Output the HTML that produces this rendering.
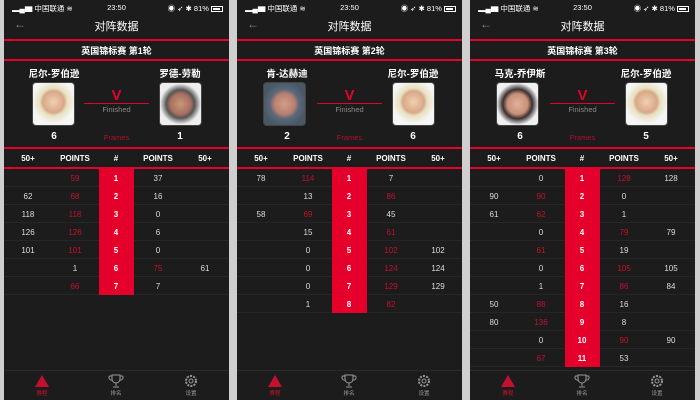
<!DOCTYPE html>
<html><head><meta charset="utf-8"><style>
*{margin:0;padding:0;box-sizing:border-box}
body{width:700px;height:400px;background:#cfcfcf;position:relative;overflow:hidden;font-family:"Liberation Sans","Noto Sans CJK SC",sans-serif;color:#fff}
.ph{position:absolute;top:0;width:225px;height:400px;background:#1c1c1c;overflow:hidden}
.sb{position:absolute;top:1px;left:0;right:0;height:12px;font-size:7.5px;color:#fff}
.sb .l{position:absolute;left:8px;top:2px}
.sb .c{position:absolute;left:0;right:0;text-align:center;top:2px}
.sb .r{position:absolute;right:6px;top:2px}
.bat{display:inline-block;width:12px;height:6px;border:1px solid #fff;vertical-align:-1px;position:relative}
.bat:after{content:"";position:absolute;left:1px;top:1px;width:7px;height:2px;background:#fff}
.ttl{position:absolute;top:18px;left:0;right:0;text-align:center;font-size:11px}
.back{position:absolute;left:10px;top:17px;color:#888;font-size:12px}
.rl{position:absolute;left:0;right:0;height:2px;background:#e4002b}
.tour{position:absolute;top:42px;left:0;right:0;height:18px;line-height:18px;text-align:center;font-size:9px;font-weight:bold}
.nm{position:absolute;top:66px;width:80px;text-align:center;font-size:9.5px;font-weight:bold}
.av{position:absolute;top:82px;width:43px;height:44px;border-radius:4px;border:1px solid #444;overflow:hidden}
.sc{position:absolute;top:131px;width:80px;text-align:center;font-size:10px;font-weight:bold}
.v{position:absolute;left:90px;width:45px;top:87px;text-align:center;color:#e4002b;font-weight:bold;font-size:15px}
.fin{position:absolute;left:80px;width:65px;top:103px;text-align:center;color:#888;font-size:7.5px;border-top:1px solid #e4002b;padding-top:1px}
.fr{position:absolute;left:80px;width:65px;top:133px;text-align:center;color:#b0102a;font-size:7.5px}
.hd{position:absolute;top:150px;left:0;right:0;height:18px;font-size:8px;font-weight:bold}
.hd span,.row span{position:absolute;width:50px;margin-left:-25px;text-align:center;top:4px}
.row{position:absolute;left:0;right:0;height:18px;border-bottom:1px solid #262626;font-size:8px;color:#ddd}
.row span{top:5px}
.row .n{color:#fff;font-weight:bold;z-index:3}
.red{color:#c4102e!important}
.col{position:absolute;left:95px;width:35px;top:169px;background:#e4002b;z-index:2}
.tab{position:absolute;top:370px;left:0;right:0;height:30px;border-top:1px solid #2a2a2a;background:#1c1c1c}
.ti{position:absolute;top:3px;width:40px;margin-left:-20px;text-align:center;font-size:5.5px;color:#999}
.ti svg{display:block;margin:0 auto 1px}
</style></head><body>

<!-- PHONE 1 -->
<div class="ph" style="left:4px">
<div class="sb"><span class="l">▂▄▆ 中国联通 ≋</span><span class="c">23:50</span><span class="r">◉ ➶ ✱ 81% <span class="bat"></span></span></div>
<div class="back">←</div><div class="ttl">对阵数据</div>
<div class="rl" style="top:39px"></div>
<div class="tour">英国锦标赛 第1轮</div>
<div class="rl" style="top:59px"></div>
<div class="nm" style="left:10px">尼尔-罗伯逊</div><div class="nm" style="left:136px">罗德-劳勒</div>
<div class="av" style="left:28px;background:radial-gradient(circle at 50% 45%,#f0d0b0 0,#d8a888 35%,#e8e0c0 45%,#f5f5f5 70%)"></div>
<div class="av" style="left:155px;background:radial-gradient(circle at 50% 50%,#c89878 0,#a87060 35%,#555 48%,#eee 70%)"></div>
<div class="v">V</div><div class="fin">Finished</div>
<div class="sc" style="left:10px">6</div><div class="fr">Frames</div><div class="sc" style="left:136px">1</div>
<div class="rl" style="top:147px"></div>
<div class="hd"><span style="left:24px">50+</span><span style="left:71px">POINTS</span><span style="left:112px">#</span><span style="left:154px">POINTS</span><span style="left:201px">50+</span></div>
<div class="rl" style="top:167px"></div>
<div class="col" style="height:126px"></div>
<div class="row" style="top:169px"><span style="left:71px" class="red">59</span><span style="left:112px" class="n">1</span><span style="left:154px">37</span></div>
<div class="row" style="top:187px"><span style="left:24px">62</span><span style="left:71px" class="red">68</span><span style="left:112px" class="n">2</span><span style="left:154px">16</span></div>
<div class="row" style="top:205px"><span style="left:24px">118</span><span style="left:71px" class="red">118</span><span style="left:112px" class="n">3</span><span style="left:154px">0</span></div>
<div class="row" style="top:223px"><span style="left:24px">126</span><span style="left:71px" class="red">126</span><span style="left:112px" class="n">4</span><span style="left:154px">6</span></div>
<div class="row" style="top:241px"><span style="left:24px">101</span><span style="left:71px" class="red">101</span><span style="left:112px" class="n">5</span><span style="left:154px">0</span></div>
<div class="row" style="top:259px"><span style="left:71px">1</span><span style="left:112px" class="n">6</span><span style="left:154px" class="red">75</span><span style="left:201px">61</span></div>
<div class="row" style="top:277px"><span style="left:71px" class="red">66</span><span style="left:112px" class="n">7</span><span style="left:154px">7</span></div>
<div class="tab">
<div class="ti" style="left:38px;color:#d0102e"><svg width="16" height="14" viewBox="0 0 16 14"><path d="M8 1L15 13H1Z" fill="#c4102e"/></svg>赛程</div>
<div class="ti" style="left:112px"><svg width="16" height="14" viewBox="0 0 16 14" fill="none" stroke="#999"><path d="M4 1h8v4a4 4 0 0 1-8 0zM4 2H1.5a2.5 2.5 0 0 0 2.5 4M12 2h2.5a2.5 2.5 0 0 1-2.5 4M8 9v3M5 13h6"/></svg>排名</div>
<div class="ti" style="left:187px"><svg width="16" height="14" viewBox="0 0 16 14" fill="none" stroke="#999"><circle cx="8" cy="7" r="5" stroke-dasharray="2 1.2" stroke-width="2"/><circle cx="8" cy="7" r="2"/></svg>设置</div>
</div>
</div>

<!-- PHONE 2 -->
<div class="ph" style="left:237px">
<div class="sb"><span class="l">▂▄▆ 中国联通 ≋</span><span class="c">23:50</span><span class="r">◉ ➶ ✱ 81% <span class="bat"></span></span></div>
<div class="back">←</div><div class="ttl">对阵数据</div>
<div class="rl" style="top:39px"></div>
<div class="tour">英国锦标赛 第2轮</div>
<div class="rl" style="top:59px"></div>
<div class="nm" style="left:10px">肯-达赫迪</div><div class="nm" style="left:136px">尼尔-罗伯逊</div>
<div class="av" style="left:26px;background:radial-gradient(circle at 50% 50%,#d0a088 0,#b88070 35%,#5a6878 50%,#4a5866 75%)"></div>
<div class="av" style="left:155px;background:radial-gradient(circle at 50% 45%,#f0d0b0 0,#d8a888 35%,#e8e0c0 45%,#f5f5f5 70%)"></div>
<div class="v">V</div><div class="fin">Finished</div>
<div class="sc" style="left:10px">2</div><div class="fr">Frames</div><div class="sc" style="left:136px">6</div>
<div class="rl" style="top:147px"></div>
<div class="hd"><span style="left:24px">50+</span><span style="left:71px">POINTS</span><span style="left:112px">#</span><span style="left:154px">POINTS</span><span style="left:201px">50+</span></div>
<div class="rl" style="top:167px"></div>
<div class="col" style="height:144px"></div>
<div class="row" style="top:169px"><span style="left:24px">78</span><span style="left:71px" class="red">114</span><span style="left:112px" class="n">1</span><span style="left:154px">7</span></div>
<div class="row" style="top:187px"><span style="left:71px">13</span><span style="left:112px" class="n">2</span><span style="left:154px" class="red">86</span></div>
<div class="row" style="top:205px"><span style="left:24px">58</span><span style="left:71px" class="red">69</span><span style="left:112px" class="n">3</span><span style="left:154px">45</span></div>
<div class="row" style="top:223px"><span style="left:71px">15</span><span style="left:112px" class="n">4</span><span style="left:154px" class="red">61</span></div>
<div class="row" style="top:241px"><span style="left:71px">0</span><span style="left:112px" class="n">5</span><span style="left:154px" class="red">102</span><span style="left:201px">102</span></div>
<div class="row" style="top:259px"><span style="left:71px">0</span><span style="left:112px" class="n">6</span><span style="left:154px" class="red">124</span><span style="left:201px">124</span></div>
<div class="row" style="top:277px"><span style="left:71px">0</span><span style="left:112px" class="n">7</span><span style="left:154px" class="red">129</span><span style="left:201px">129</span></div>
<div class="row" style="top:295px"><span style="left:71px">1</span><span style="left:112px" class="n">8</span><span style="left:154px" class="red">82</span></div>
<div class="tab">
<div class="ti" style="left:38px;color:#d0102e"><svg width="16" height="14" viewBox="0 0 16 14"><path d="M8 1L15 13H1Z" fill="#c4102e"/></svg>赛程</div>
<div class="ti" style="left:112px"><svg width="16" height="14" viewBox="0 0 16 14" fill="none" stroke="#999"><path d="M4 1h8v4a4 4 0 0 1-8 0zM4 2H1.5a2.5 2.5 0 0 0 2.5 4M12 2h2.5a2.5 2.5 0 0 1-2.5 4M8 9v3M5 13h6"/></svg>排名</div>
<div class="ti" style="left:187px"><svg width="16" height="14" viewBox="0 0 16 14" fill="none" stroke="#999"><circle cx="8" cy="7" r="5" stroke-dasharray="2 1.2" stroke-width="2"/><circle cx="8" cy="7" r="2"/></svg>设置</div>
</div>
</div>

<!-- PHONE 3 -->
<div class="ph" style="left:470px">
<div class="sb"><span class="l">▂▄▆ 中国联通 ≋</span><span class="c">23:50</span><span class="r">◉ ➶ ✱ 81% <span class="bat"></span></span></div>
<div class="back">←</div><div class="ttl">对阵数据</div>
<div class="rl" style="top:39px"></div>
<div class="tour">英国锦标赛 第3轮</div>
<div class="rl" style="top:59px"></div>
<div class="nm" style="left:10px">马克-乔伊斯</div><div class="nm" style="left:136px">尼尔-罗伯逊</div>
<div class="av" style="left:26px;background:radial-gradient(circle at 50% 50%,#e0b098 0,#c89078 35%,#3a3030 50%,#f0f0f0 72%)"></div>
<div class="av" style="left:155px;background:radial-gradient(circle at 50% 45%,#f0d0b0 0,#d8a888 35%,#e8e0c0 45%,#f5f5f5 70%)"></div>
<div class="v">V</div><div class="fin">Finished</div>
<div class="sc" style="left:10px">6</div><div class="fr">Frames</div><div class="sc" style="left:136px">5</div>
<div class="rl" style="top:147px"></div>
<div class="hd"><span style="left:24px">50+</span><span style="left:71px">POINTS</span><span style="left:112px">#</span><span style="left:154px">POINTS</span><span style="left:201px">50+</span></div>
<div class="rl" style="top:167px"></div>
<div class="col" style="height:198px"></div>
<div class="row" style="top:169px"><span style="left:71px">0</span><span style="left:112px" class="n">1</span><span style="left:154px" class="red">128</span><span style="left:201px">128</span></div>
<div class="row" style="top:187px"><span style="left:24px">90</span><span style="left:71px" class="red">90</span><span style="left:112px" class="n">2</span><span style="left:154px">0</span></div>
<div class="row" style="top:205px"><span style="left:24px">61</span><span style="left:71px" class="red">62</span><span style="left:112px" class="n">3</span><span style="left:154px">1</span></div>
<div class="row" style="top:223px"><span style="left:71px">0</span><span style="left:112px" class="n">4</span><span style="left:154px" class="red">79</span><span style="left:201px">79</span></div>
<div class="row" style="top:241px"><span style="left:71px" class="red">61</span><span style="left:112px" class="n">5</span><span style="left:154px">19</span></div>
<div class="row" style="top:259px"><span style="left:71px">0</span><span style="left:112px" class="n">6</span><span style="left:154px" class="red">105</span><span style="left:201px">105</span></div>
<div class="row" style="top:277px"><span style="left:71px">1</span><span style="left:112px" class="n">7</span><span style="left:154px" class="red">86</span><span style="left:201px">84</span></div>
<div class="row" style="top:295px"><span style="left:24px">50</span><span style="left:71px" class="red">88</span><span style="left:112px" class="n">8</span><span style="left:154px">16</span></div>
<div class="row" style="top:313px"><span style="left:24px">80</span><span style="left:71px" class="red">136</span><span style="left:112px" class="n">9</span><span style="left:154px">8</span></div>
<div class="row" style="top:331px"><span style="left:71px">0</span><span style="left:112px" class="n">10</span><span style="left:154px" class="red">90</span><span style="left:201px">90</span></div>
<div class="row" style="top:349px"><span style="left:71px" class="red">67</span><span style="left:112px" class="n">11</span><span style="left:154px">53</span></div>
<div class="tab">
<div class="ti" style="left:38px;color:#d0102e"><svg width="16" height="14" viewBox="0 0 16 14"><path d="M8 1L15 13H1Z" fill="#c4102e"/></svg>赛程</div>
<div class="ti" style="left:112px"><svg width="16" height="14" viewBox="0 0 16 14" fill="none" stroke="#999"><path d="M4 1h8v4a4 4 0 0 1-8 0zM4 2H1.5a2.5 2.5 0 0 0 2.5 4M12 2h2.5a2.5 2.5 0 0 1-2.5 4M8 9v3M5 13h6"/></svg>排名</div>
<div class="ti" style="left:187px"><svg width="16" height="14" viewBox="0 0 16 14" fill="none" stroke="#999"><circle cx="8" cy="7" r="5" stroke-dasharray="2 1.2" stroke-width="2"/><circle cx="8" cy="7" r="2"/></svg>设置</div>
</div>
</div>
</body></html>
